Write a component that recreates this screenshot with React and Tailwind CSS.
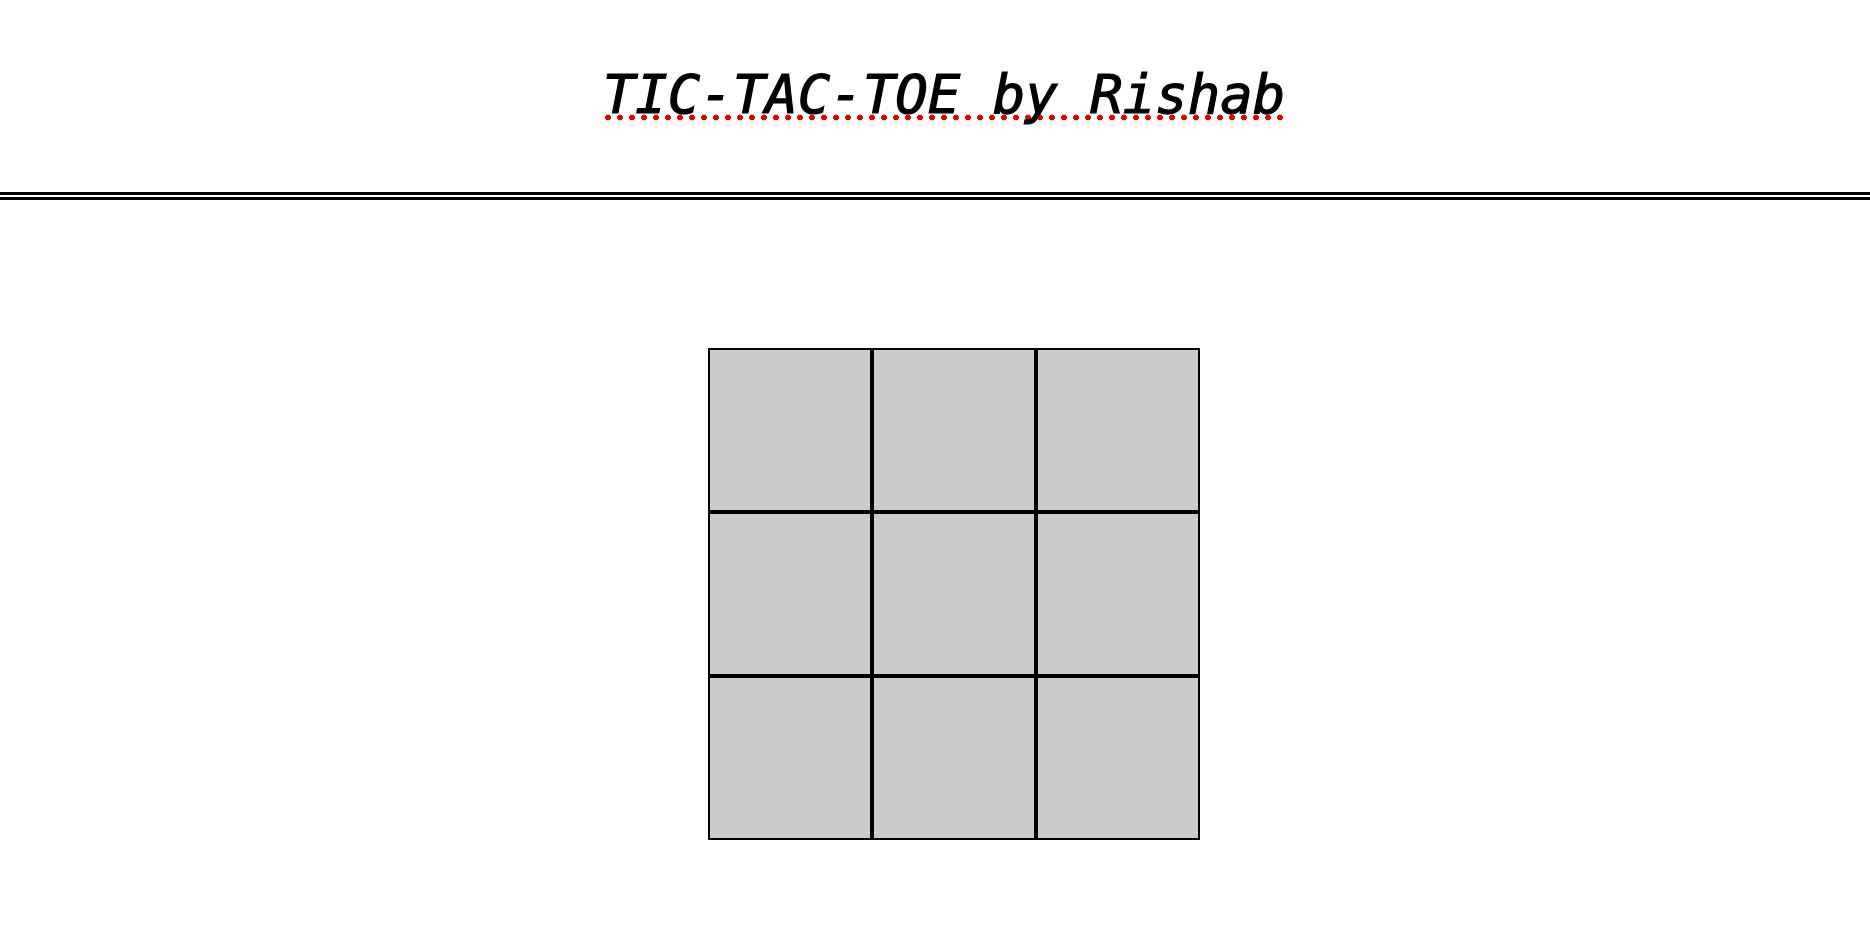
const App = () => {
    const cells = Array.from({ length: 9 });

    return (
        <div className="min-h-screen bg-white">
            <header className="flex h-[200px] items-start justify-center border-b-[8px] border-double border-black pt-[66px]">
                <h1 className="ml-[14px] inline-block bg-[radial-gradient(circle,#e60000_2.6px,transparent_3.2px)] bg-[length:12px_7px] bg-[position:3px_calc(100%-3px)] bg-repeat-x pl-[4px] font-['DejaVu_Sans_Mono',monospace] text-[54px] leading-[58px] font-normal text-black italic [-webkit-text-stroke:1.2px_black]">
                    TIC-TAC-TOE by Rishab
                </h1>
            </header>
            <main className="flex justify-center pt-[148px] pl-[38px]">
                <div className="grid grid-cols-[repeat(3,164px)] grid-rows-[repeat(3,164px)]">
                    {cells.map((_, i) => (
                        <div key={i} className="border-2 border-black bg-[#cccccc]" />
                    ))}
                </div>
            </main>
        </div>
    );
};

export default App;
